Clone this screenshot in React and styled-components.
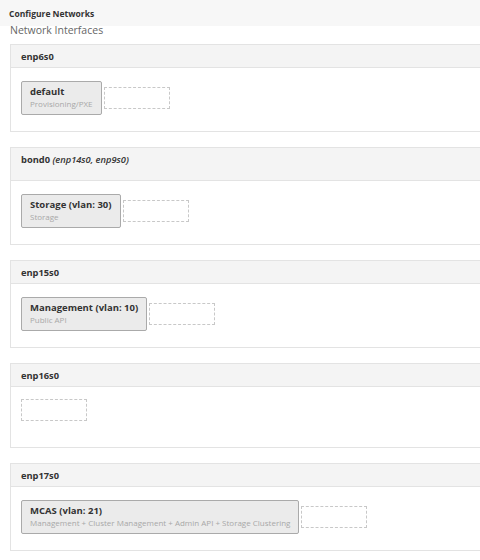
import React from 'react';
import styled, { createGlobalStyle } from 'styled-components';

const GlobalStyle = createGlobalStyle`
  html, body {
    margin: 0;
    padding: 0;
    background: #ffffff;
    overflow: hidden;
  }
  body {
    font-family: 'Open Sans', 'Noto Sans', sans-serif;
    color: #333;
  }
`;

const Page = styled.div`
  width: 480px;
  height: 560px;
  overflow: hidden;
`;

const TopBar = styled.div`
  height: 26px;
  background: #f7f7f7;
  display: flex;
  align-items: center;
  padding-left: 9px;
  font-size: 8.5px;
  font-weight: 700;
  color: #333;
`;

const SectionTitle = styled.div`
  margin: 0 10px;
  font-size: 10.5px;
  line-height: 9px;
  color: #666;
`;

const List = styled.div`
  display: flex;
  flex-direction: column;
  gap: 15px;
  margin: 9px -20px 0 10px;
`;

const Panel = styled.div`
  border: 1px solid #e3e3e3;
  background: #fff;
`;

const PanelHeader = styled.div`
  height: ${p => (p.$tall ? 33 : 23)}px;
  box-sizing: border-box;
  padding: ${p => (p.$tall ? 5 : 4.5)}px 10px 0;
  background: #f4f4f4;
  border-bottom: 1px solid #e3e3e3;
  font-size: 9.3px;
  line-height: 14px;
  font-weight: 700;
  color: #333;

  em {
    font-weight: 600;
  }
`;

const PanelBody = styled.div`
  display: flex;
  align-items: center;
  gap: 2px;
  padding: ${p => (p.$empty ? '12px 10px 26px' : '13px 10px 16px')};
`;

const Card = styled.div`
  background: #ebebeb;
  border: 1px solid #aaa;
  border-radius: 2px;
  padding: 4px 8px 5px;
`;

const CardTitle = styled.div`
  font-size: 9.5px;
  line-height: 12px;
  font-weight: 700;
  color: #333;
`;

const CardSub = styled.div`
  font-size: 8px;
  line-height: 11px;
  color: #a8a8a8;
`;

const DropZone = styled.div`
  width: 64px;
  height: 20px;
  border: 1px dashed #c8c8c8;
`;

const interfaces = [
  { name: 'enp6s0', network: { title: 'default', sub: 'Provisioning/PXE' } },
  {
    name: 'bond0',
    slaves: 'enp14s0, enp9s0',
    tall: true,
    network: { title: 'Storage (vlan: 30)', sub: 'Storage' },
  },
  { name: 'enp15s0', network: { title: 'Management (vlan: 10)', sub: 'Public API' } },
  { name: 'enp16s0' },
  {
    name: 'enp17s0',
    network: {
      title: 'MCAS (vlan: 21)',
      sub: 'Management + Cluster Management + Admin API + Storage Clustering',
    },
  },
];

const App = () => {
  return (
    <Page>
      <GlobalStyle />
      <TopBar>Configure Networks</TopBar>
      <SectionTitle>Network Interfaces</SectionTitle>
      <List>
        {interfaces.map(iface => (
          <Panel key={iface.name}>
            <PanelHeader $tall={iface.tall}>
              {iface.name}
              {iface.slaves && <> <em>({iface.slaves})</em></>}
            </PanelHeader>
            <PanelBody $empty={!iface.network}>
              {iface.network && (
                <Card>
                  <CardTitle>{iface.network.title}</CardTitle>
                  <CardSub>{iface.network.sub}</CardSub>
                </Card>
              )}
              <DropZone />
            </PanelBody>
          </Panel>
        ))}
      </List>
    </Page>
  );
};

export default App;
